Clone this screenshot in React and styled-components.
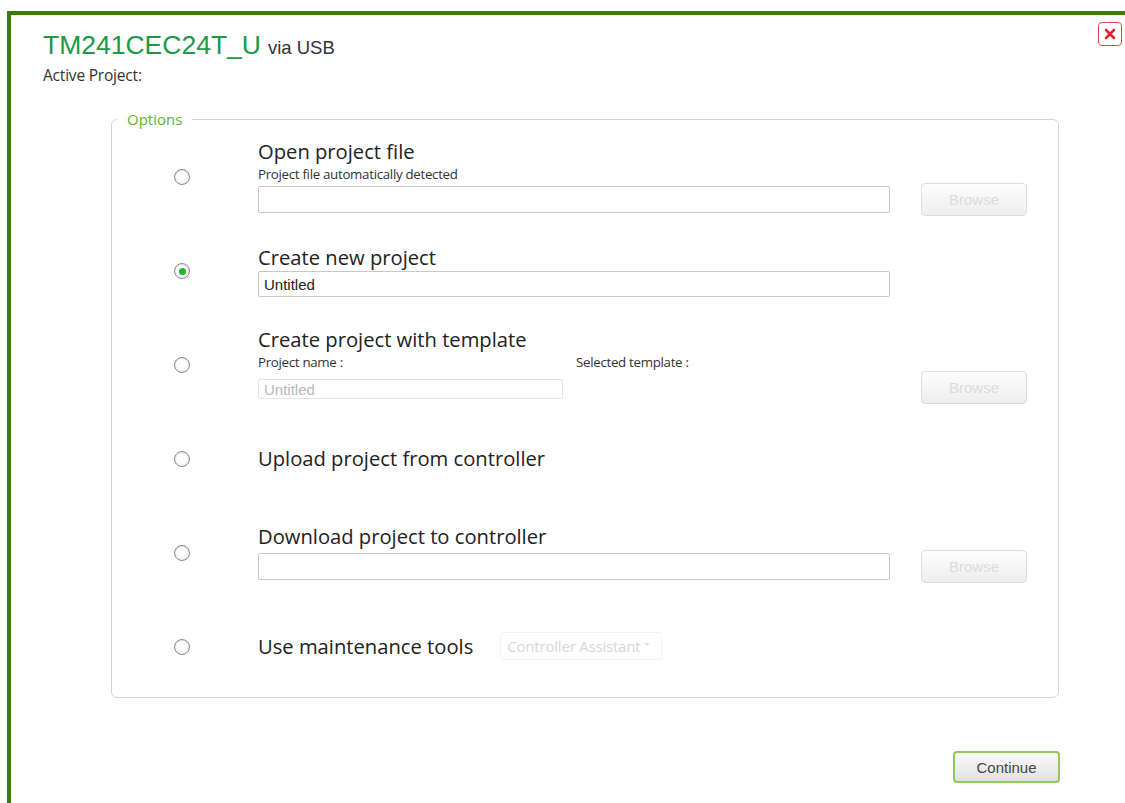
import React from 'react'
import styled, { createGlobalStyle } from 'styled-components'

const GlobalStyle = createGlobalStyle`
  html, body {
    margin: 0;
    padding: 0;
    background: #ffffff;
  }
  body {
    font-family: "Open Sans", "Noto Sans", sans-serif;
    color: #222;
    overflow: hidden;
  }
`

const Frame = styled.div`
  margin: 11px 0 0 7px;
  min-height: calc(100vh - 11px);
  border-top: 4px solid #3b7d0a;
  border-left: 4px solid #3b7d0a;
  box-sizing: border-box;
`

const Header = styled.div`
  display: flex;
  justify-content: space-between;
  align-items: flex-start;
  padding: 7px 3px 0 32px;
`

const TitleBlock = styled.div`
  display: flex;
  flex-direction: column;
  padding-top: 8px;
`

const Device = styled.div`
  font-family: "Liberation Sans", Arial, sans-serif;
  font-size: 26.5px;
  line-height: 30px;
  color: #1a9b45;
  white-space: nowrap;
`

const Via = styled.span`
  font-size: 18.5px;
  color: #333;
  margin-left: 7px;
`

const ActiveProject = styled.div`
  font-size: 15.5px;
  line-height: 18px;
  margin-top: 3px;
  color: #333;
  letter-spacing: -0.2px;
`

const CloseButton = styled.button`
  width: 24px;
  height: 24px;
  padding: 0;
  border: 1.5px solid #e0474c;
  border-radius: 4px;
  background: #fff;
  display: flex;
  align-items: center;
  justify-content: center;
  cursor: pointer;
`

const Options = styled.fieldset`
  margin: 25px 0 0 100px;
  width: 948px;
  box-sizing: border-box;
  padding: 0 0 4px 0;
  border: 1px solid #d4d4d4;
  border-radius: 6px;
`

const Legend = styled.legend`
  margin-left: 5px;
  padding: 0 10px;
  font-size: 15px;
  line-height: 20px;
  color: #62b32e;
`

const Option = styled.div`
  height: 94px;
  display: grid;
  grid-template-columns: 146px 632px 137px;
  align-content: center;
  align-items: center;
`

const RadioCell = styled.div`
  grid-column: 1;
  grid-row: 1 / span 4;
  padding: 2px 0 0 62px;
  display: flex;
  align-items: center;
`

const Radio = styled.span`
  width: 16px;
  height: 16px;
  box-sizing: border-box;
  border-radius: 50%;
  border: 1px solid #8a8a8a;
  background: radial-gradient(circle at 50% 35%, #ffffff 40%, #e6e6e6 100%);
  box-shadow: inset 0 1px 1px rgba(0, 0, 0, 0.12);
  display: flex;
  align-items: center;
  justify-content: center;

  &::after {
    content: '';
    width: 7px;
    height: 7px;
    border-radius: 50%;
    background: ${(p) => (p.$checked ? '#25b52b' : 'transparent')};
  }
`

const Label = styled.div`
  grid-column: 2;
  font-size: 20.2px;
  line-height: 28px;
  color: #222;
  white-space: nowrap;
  display: flex;
  align-items: center;
`

const Hint = styled.div`
  grid-column: 2;
  font-size: 13.3px;
  line-height: 18px;
  letter-spacing: -0.3px;
  color: #333;
  display: flex;
`

const HintItem = styled.span`
  width: ${(p) => p.$width || 'auto'};
`

const FieldCell = styled.div`
  grid-column: 2;
  margin-top: ${(p) => p.$gap || 0}px;
`

const Input = styled.input`
  box-sizing: border-box;
  width: ${(p) => p.$width || 632}px;
  height: ${(p) => p.$height || 27}px;
  border: 1px solid ${(p) => (p.disabled ? '#e4e4e4' : '#c9c9c9')};
  border-radius: 2px;
  padding: 0 5px;
  font-family: "Liberation Sans", Arial, sans-serif;
  font-size: 15px;
  color: #222;
  background: #fff;
  outline: none;

  &:disabled {
    color: #b9b9b9;
  }
`

const BrowseButton = styled.button`
  grid-column: 3;
  justify-self: end;
  width: 106px;
  height: 33px;
  border: 1px solid #dedede;
  border-radius: 4px;
  background: linear-gradient(#fdfdfd, #eeeeee);
  font-family: "Liberation Sans", Arial, sans-serif;
  font-size: 15px;
  color: #dcdcdc;
`

const Select = styled.div`
  margin-left: 27px;
  width: 162px;
  height: 28px;
  box-sizing: border-box;
  border: 1px solid #f2f2f2;
  border-radius: 3px;
  display: flex;
  align-items: center;
  padding-left: 6px;
  gap: 4px;
  font-size: 15px;
  letter-spacing: -0.2px;
  color: #d8d8d8;
`

const Caret = styled.span`
  width: 0;
  height: 0;
  border-left: 3px solid transparent;
  border-right: 3px solid transparent;
  border-top: 3px solid #e2e2e2;
  margin-top: -4px;
`

const Footer = styled.div`
  width: 948px;
  margin: 53px 0 0 100px;
  display: flex;
  justify-content: flex-end;
`

const ContinueButton = styled.button`
  width: 107px;
  height: 32px;
  margin-right: -1px;
  border: 2px solid #8fca5c;
  border-radius: 4px;
  background: linear-gradient(#fbfbfb, #e1e1e1);
  font-family: "Liberation Sans", Arial, sans-serif;
  font-size: 15px;
  color: #444;
  cursor: pointer;
`

function CloseIcon() {
  return (
    <svg width="12" height="12" viewBox="0 0 12 12">
      <path d="M2 2 L10 10 M10 2 L2 10" stroke="#e4252c" strokeWidth="2.6" strokeLinecap="round" />
    </svg>
  )
}

export default function App() {
  return (
    <>
      <GlobalStyle />
      <Frame>
        <Header>
          <TitleBlock>
            <Device>
              TM241CEC24T_U<Via>via USB</Via>
            </Device>
            <ActiveProject>Active Project:</ActiveProject>
          </TitleBlock>
          <CloseButton aria-label="Close">
            <CloseIcon />
          </CloseButton>
        </Header>

        <Options>
          <Legend>Options</Legend>

          <Option>
            <RadioCell><Radio /></RadioCell>
            <Label>Open project file</Label>
            <Hint>Project file automatically detected</Hint>
            <FieldCell $gap={1}><Input defaultValue="" /></FieldCell>
            <BrowseButton disabled>Browse</BrowseButton>
          </Option>

          <Option>
            <RadioCell><Radio $checked /></RadioCell>
            <Label>Create new project</Label>
            <FieldCell><Input $height={26} defaultValue="Untitled" /></FieldCell>
          </Option>

          <Option>
            <RadioCell><Radio /></RadioCell>
            <Label>Create project with template</Label>
            <Hint>
              <HintItem $width="318px">Project name :</HintItem>
              <HintItem>Selected template :</HintItem>
            </Hint>
            <FieldCell $gap={3}>
              <Input $width={305} $height={20} disabled defaultValue="Untitled" />
            </FieldCell>
            <BrowseButton disabled>Browse</BrowseButton>
          </Option>

          <Option>
            <RadioCell><Radio /></RadioCell>
            <Label>Upload project from controller</Label>
          </Option>

          <Option>
            <RadioCell><Radio /></RadioCell>
            <Label>Download project to controller</Label>
            <FieldCell><Input defaultValue="" /></FieldCell>
            <BrowseButton disabled>Browse</BrowseButton>
          </Option>

          <Option>
            <RadioCell><Radio /></RadioCell>
            <Label>
              Use maintenance tools
              <Select>
                Controller Assistant <Caret />
              </Select>
            </Label>
          </Option>
        </Options>

        <Footer>
          <ContinueButton>Continue</ContinueButton>
        </Footer>
      </Frame>
    </>
  )
}
